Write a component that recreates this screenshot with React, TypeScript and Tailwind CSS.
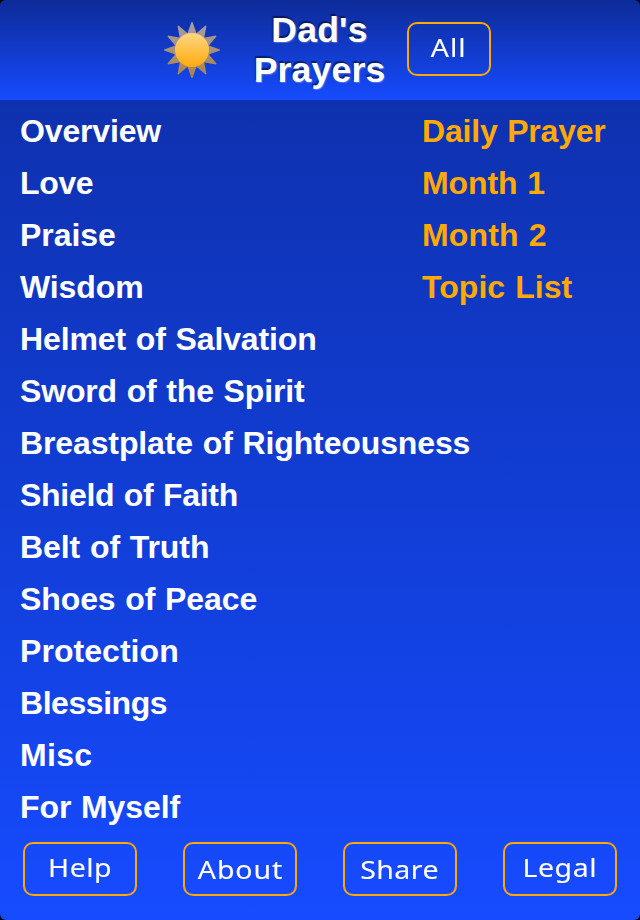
import React from 'react';

const topics = [
  { label: 'Overview', tracking: 'tracking-[-0.15px]' },
  { label: 'Love', tracking: 'tracking-[-0.35px]' },
  { label: 'Praise', tracking: 'tracking-[-0.05px]' },
  { label: 'Wisdom', tracking: 'tracking-[-0.1px]' },
  { label: 'Helmet of Salvation', tracking: 'tracking-[-0.12px]' },
  { label: 'Sword of the Spirit', tracking: 'tracking-[-0.16px]' },
  { label: 'Breastplate of Righteousness', tracking: 'tracking-[-0.12px]' },
  { label: 'Shield of Faith', tracking: 'tracking-[-0.3px]' },
  { label: 'Belt of Truth', tracking: 'tracking-[-0.08px]' },
  { label: 'Shoes of Peace', tracking: 'tracking-[-0.1px]' },
  { label: 'Protection', tracking: 'tracking-[0.05px]' },
  { label: 'Blessings', tracking: 'tracking-[-0.45px]' },
  { label: 'Misc', tracking: 'tracking-[0.3px]' },
  { label: 'For Myself', tracking: 'tracking-[-0.1px]' },
];

const lists = [
  { label: 'Daily Prayer', tracking: 'tracking-[-0.2px]' },
  { label: 'Month 1', tracking: 'tracking-[-0.1px]' },
  { label: 'Month 2', tracking: 'tracking-[0.15px]' },
  { label: 'Topic List', tracking: 'tracking-[0.05px]' },
];

const footer = [
  { label: 'Help', text: 'pb-[4px] tracking-[0.4px]' },
  { label: 'About', text: 'tracking-[0.8px]' },
  { label: 'Share', text: 'tracking-[0.4px]' },
  { label: 'Legal', text: 'pb-[4px] tracking-[0.5px]' },
];

const rays = [0, 30, 60, 90, 120, 150, 180, 210, 240, 270, 300, 330];

const Sun: React.FC = () => (
  <svg className="h-[60px] w-[60px]" viewBox="-30 -30 60 60">
    <defs>
      <linearGradient id="disc" x1="0" y1="0" x2="0" y2="1">
        <stop offset="0" stopColor="#ffd684" />
        <stop offset="1" stopColor="#ffab0c" />
      </linearGradient>
      <linearGradient id="rays" gradientUnits="userSpaceOnUse" x1="0" y1="-28" x2="0" y2="28">
        <stop offset="0" stopColor="#b3a7ad" />
        <stop offset="1" stopColor="#b98a35" />
      </linearGradient>
      <mask id="rayMask" maskUnits="userSpaceOnUse" x="-30" y="-30" width="60" height="60">
        {rays.map((angle) => (
          <path key={angle} d="M-0.5 -28 L0.5 -28 L4.8 -16 L-4.8 -16 Z" fill="white" transform={`rotate(${angle})`} />
        ))}
        <circle r="17.5" fill="white" />
      </mask>
    </defs>
    <rect x="-30" y="-30" width="60" height="60" fill="url(#rays)" mask="url(#rayMask)" opacity="0.92" />
    <circle r="17" fill="url(#disc)" />
  </svg>
);

interface PillProps {
  label: string;
  box: string;
  text: string;
}

const PillButton: React.FC<PillProps> = ({ label, box, text }) => (
  <button
    className={`flex h-[54px] items-center justify-center rounded-[10px] border-2 border-[#fca806] font-['Noto_Sans','Open_Sans',sans-serif] text-[25px] leading-[30px] text-white ${box}`}
  >
    <span className={`block scale-x-[1.14] [-webkit-text-stroke:0.1px_white] ${text}`}>{label}</span>
  </button>
);

const App: React.FC = () => {
  return (
    <div className="h-[920px] w-[640px] bg-black">
      <div className="flex h-full flex-col overflow-hidden rounded-[6px] bg-linear-to-b from-[#0d2ea5] to-[#164bff] font-['Liberation_Sans',Arial,sans-serif] font-bold">
        <header className="flex h-[100px] shrink-0 bg-linear-to-b from-[#0d2b98] to-[#164bff] pl-[162px]">
          <div className="pt-5">
            <Sun />
          </div>
          <h1 className="ml-6 w-[147px] pt-[10px] text-center text-[35.5px] leading-10 tracking-[0.2px] text-white [text-shadow:-1px_-2px_1px_rgba(0,0,0,0.5),1px_1px_1px_rgba(255,255,255,0.25)]">
            Dad's Prayers
          </h1>
          <div className="ml-[14px] pt-[22px] font-normal">
            <PillButton label="All" box="w-[84px]" text="pb-[4px] tracking-[0.8px]" />
          </div>
        </header>

        <main className="flex h-[742px] shrink-0 pt-[5px] text-[32px] leading-[52px] whitespace-nowrap [word-spacing:1px]">
          <ul className="w-[422px] pl-5 text-white">
            {topics.map((item) => (
              <li key={item.label} className={item.tracking}>{item.label}</li>
            ))}
          </ul>
          <ul className="text-[#ffa904]">
            {lists.map((item) => (
              <li key={item.label} className={item.tracking}>{item.label}</li>
            ))}
          </ul>
        </main>

        <footer className="flex justify-between px-[23px] font-normal">
          {footer.map((item) => (
            <PillButton key={item.label} label={item.label} box="w-[114px]" text={item.text} />
          ))}
        </footer>
      </div>
    </div>
  );
};

export default App;
